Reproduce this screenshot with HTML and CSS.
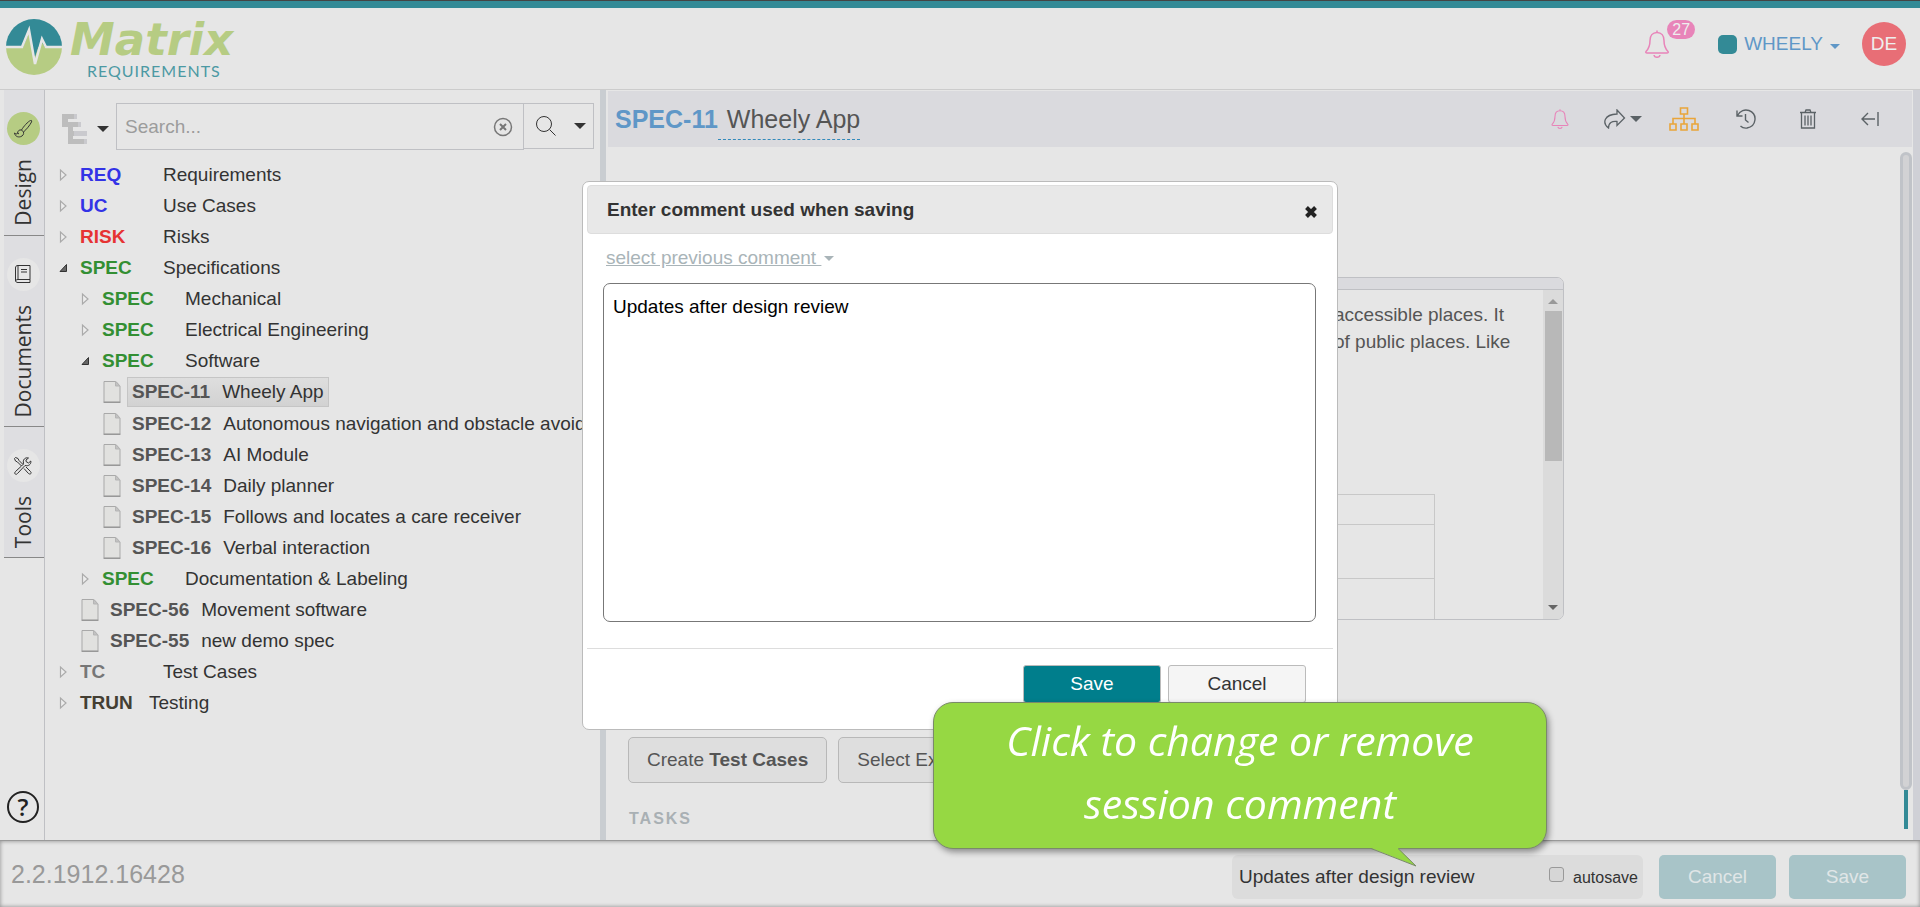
FILE: index.html
```html
<!DOCTYPE html>
<html lang="en">
<head>
  <meta charset="UTF-8" />
  <meta name="viewport" content="width=device-width, initial-scale=1.0" />
  <title>SPEC-11 Wheely App - Matrix Requirements</title>
  <link rel="stylesheet" href="styles.css">
</head>
<body>
  <!-- shared icons -->
  <svg class="defs" width="0" height="0" aria-hidden="true">
    <symbol id="bell" viewBox="0 0 24 28">
      <path d="M12 0.500V2.500M12 2.500C7.500 2.500 5 6 5 10.500C5 16.500 3.500 19 1 21.500C0.500 22.500 1 23 2 23H22C23 23 23.500 22.500 23 21.500C20.500 19 19 16.500 19 10.500C19 6 16.500 2.500 12 2.500ZM9 25C9.500 28 14.500 28 15 25" fill="none" stroke="currentColor" stroke-width="1.500" />
    </symbol>
    <symbol id="doc" viewBox="0 0 18 22">
      <path d="M1 0.500H13L17 5V21H1Z" fill="#e1e1df" stroke="#a9a9a9" />
      <path d="M12.500 0.500V5H17Z" fill="#c2c2c2" stroke="#b5b5b5" />
      <path d="M0.500 21.300H17.500" stroke="#8d8d8d" />
    </symbol>
    <symbol id="closed" viewBox="0 0 10 14">
      <path d="M1.500 2V12L7 7Z" fill="#ececec" stroke="#aaa" stroke-width="1.200" />
    </symbol>
    <symbol id="open" viewBox="0 0 10 14">
      <path d="M1 10.500L7.500 3.500V10.500Z" fill="#666" stroke="#333" />
    </symbol>
  </svg>

  <header class="header">
    <a class="logo" href="#">
      <svg width="58" height="58" viewBox="0 0 58 58" aria-hidden="true">
        <path d="M1 29A28 28 0 0 1 57 29Z" fill="#338a96" />
        <path d="M1 29A28 28 0 0 0 57 29Z" fill="#b6cc83" />
        <path d="M18 29L24 15L30 44L36 23L40 29Z" fill="#b6cc83" />
        <path d="M27 29L24 13L29 44Z" fill="#b6cc83" />
        <path d="M26 25L29 42L36 21V15L26 14Z" fill="#338a96" />
        <path d="M0 29H17L24 12L30 46L37 21L41 29H58" fill="none" stroke="#e6e6e6" stroke-width="2.500" />
      </svg>
      <span class="logo-text">
        <span class="logo-name">Matrix</span>
        <span class="logo-sub">REQUIREMENTS</span>
      </span>
    </a>
    <div class="account">
      <button class="notifications" aria-label="Notifications">
        <svg width="24" height="28"><use href="#bell" /></svg>
        <span class="badge">27</span>
      </button>
      <button class="project"><span class="project-color"></span>WHEELY<span class="caret"></span></button>
      <button class="avatar">DE</button>
    </div>
  </header>

  <main class="main">
    <nav class="sidebar">
      <a class="tab active" href="#">
        <span class="tab-icon">
          <svg width="20" height="20" viewBox="0 0 20 20" fill="none" stroke="#333" stroke-width="1"><path d="M17.500 1.500C15 2.500 10.500 7.500 8.500 11L10.500 13C13.500 10.500 17 6 18.500 3C19 1.500 18.500 1.200 17.500 1.500ZM8.500 11C6 10.500 4.800 12 4.600 14C4.400 15.500 3 15 1.500 14C2 17 4.500 18.500 7.500 17.700C10 17 11 15 10.500 13M4.600 14L6 15" /></svg>
        </span>
        <span class="tab-label">Design</span>
      </a>
      <a class="tab" href="#">
        <span class="tab-icon">
          <svg width="18" height="20" viewBox="0 0 18 20" fill="none" stroke="#333" stroke-width="1"><path d="M4 1.500H16V15.500H4V1.500C2 1.500 1.500 2.500 1.500 4V16C1.500 18 2.500 18.500 4 18.500H16V15.500M4 15.500C2.500 15.500 1.500 16.500 1.500 17M7 5.500H13M7 8H13" /></svg>
        </span>
        <span class="tab-label">Documents</span>
      </a>
      <a class="tab" href="#">
        <span class="tab-icon">
          <svg width="20" height="20" viewBox="0 0 20 20" fill="none" stroke="#333" stroke-width="1"><path d="M2.500 1.500L5 2.500L6 4.500L10 8.500L8.500 10L4.500 6L2.500 5L1.500 2.500ZM11 12.500L15.500 17.500C17.500 19 19 17 17.500 15.500L13 11M8.500 10L2.500 15.500C0.500 17.500 3 19.500 4.500 17.500L12 9.500C15 10.500 18.500 8.500 17.800 5L15.500 7L13 5.500V4L15.500 2C12 1 9.500 4 10.500 7L10 8.500" /></svg>
        </span>
        <span class="tab-label">Tools</span>
      </a>
      <button class="help" aria-label="Help">?</button>
    </nav>

    <section class="tree-panel">
      <div class="toolbar">
        <button class="tree-mode" aria-label="Tree display">
          <svg width="26" height="30" viewBox="0 0 26 30"><path d="M0 0H15V5H6V8H19V13H11V17H25V22H11V25H25V30H6V13H0Z" fill="#bdbdbd" /><path d="M12 0H15V5H12ZM16 8H19V13H16ZM12 17H25V22H12ZM22 25H25V30H22Z" fill="#cacace" /></svg>
          <span class="caret dark"></span>
        </button>
        <div class="search">
          <input type="text" class="search-input" placeholder="Search..." aria-label="Search" />
          <button class="search-clear" aria-label="Clear search">
            <svg width="20" height="20" viewBox="0 0 20 20" fill="none" stroke="#777"><circle cx="10" cy="10" r="8.500" stroke-width="1.500" /><path d="M7 7L13 13M13 7L7 13" stroke-width="2" /></svg>
          </button>
        </div>
        <button class="search-go" aria-label="Run search">
          <svg width="22" height="22" viewBox="0 0 22 22" fill="none" stroke="#333"><circle cx="9" cy="9" r="7.500" /><path d="M14.500 14.500L20.500 20.500" /></svg>
          <span class="caret dark"></span>
        </button>
      </div>
      <ul class="tree">
        <li class="node"><svg class="arrow"><use href="#closed" /></svg><b class="code req">REQ</b>Requirements</li>
        <li class="node"><svg class="arrow"><use href="#closed" /></svg><b class="code req">UC</b>Use Cases</li>
        <li class="node"><svg class="arrow"><use href="#closed" /></svg><b class="code risk">RISK</b>Risks</li>
        <li class="node"><svg class="arrow"><use href="#open" /></svg><b class="code spec">SPEC</b>Specifications</li>
        <li class="node level-2"><svg class="arrow"><use href="#closed" /></svg><b class="code spec">SPEC</b>Mechanical</li>
        <li class="node level-2"><svg class="arrow"><use href="#closed" /></svg><b class="code spec">SPEC</b>Electrical Engineering</li>
        <li class="node level-2"><svg class="arrow"><use href="#open" /></svg><b class="code spec">SPEC</b>Software</li>
        <li class="node level-3 current"><svg class="doc"><use href="#doc" /></svg><a class="item" href="#"><b>SPEC-11</b>Wheely App</a></li>
        <li class="node level-3"><svg class="doc"><use href="#doc" /></svg><a class="item" href="#"><b>SPEC-12</b>Autonomous navigation and obstacle avoidance</a></li>
        <li class="node level-3"><svg class="doc"><use href="#doc" /></svg><a class="item" href="#"><b>SPEC-13</b>AI Module</a></li>
        <li class="node level-3"><svg class="doc"><use href="#doc" /></svg><a class="item" href="#"><b>SPEC-14</b>Daily planner</a></li>
        <li class="node level-3"><svg class="doc"><use href="#doc" /></svg><a class="item" href="#"><b>SPEC-15</b>Follows and locates a care receiver</a></li>
        <li class="node level-3"><svg class="doc"><use href="#doc" /></svg><a class="item" href="#"><b>SPEC-16</b>Verbal interaction</a></li>
        <li class="node level-2"><svg class="arrow"><use href="#closed" /></svg><b class="code spec">SPEC</b>Documentation &amp; Labeling</li>
        <li class="node level-2"><svg class="doc"><use href="#doc" /></svg><a class="item" href="#"><b>SPEC-56</b>Movement software</a></li>
        <li class="node level-2"><svg class="doc"><use href="#doc" /></svg><a class="item" href="#"><b>SPEC-55</b>new demo spec</a></li>
        <li class="node"><svg class="arrow"><use href="#closed" /></svg><b class="code tc">TC</b>Test Cases</li>
        <li class="node"><svg class="arrow"><use href="#closed" /></svg><b class="code trun">TRUN</b>Testing</li>
      </ul>
    </section>

    <section class="item-panel">
      <div class="item-header">
        <h1 class="item-title"><b>SPEC-11</b><span>Wheely App</span></h1>
        <div class="item-actions">
          <button class="action pink" aria-label="Subscribe"><svg width="18" height="20"><use href="#bell" /></svg></button>
          <button class="action" aria-label="Share">
            <svg width="23" height="20" viewBox="0 0 23 20" fill="none" stroke="currentColor" stroke-width="1.300"><path d="M14 1L21.500 9L14 16.500V12.500C9 12 5.500 13.500 5.500 19C-1 14 1 5.500 14 5Z" /></svg>
            <span class="caret dark"></span>
          </button>
          <button class="action orange" aria-label="Links">
            <svg width="30" height="24" viewBox="0 0 30 24" fill="none" stroke="currentColor" stroke-width="1.600"><path d="M11.500 1H18.500V7H11.500ZM15 7V17M4 17V11.500H26V17M1 17H7V23H1ZM12 17H18V23H12ZM23 17H29V23H23Z" /></svg>
          </button>
          <button class="action" aria-label="History">
            <svg width="20" height="20" viewBox="0 0 20 20" fill="none" stroke="currentColor" stroke-width="1.400"><path d="M1 1.500V7H6.500M1.500 6.500C4 1.500 9 0 13 1.500C22 5 20.500 17.500 11 19C8.500 19.300 6 18.500 4.500 17M9.500 5V11L12.500 13.500" /></svg>
          </button>
          <button class="action" aria-label="Delete">
            <svg width="18" height="20" viewBox="0 0 18 20" fill="none" stroke="currentColor" stroke-width="1.300"><path d="M1 3.500H17M6 3.500L7 1H11L12 3.500M2.500 3.500V19H15.500V3.500M6 6.500V16.500M9 6.500V16.500M12 6.500V16.500" /></svg>
          </button>
          <button class="action" aria-label="Collapse">
            <svg width="18" height="16" viewBox="0 0 18 16" fill="none" stroke="currentColor" stroke-width="1.400"><path d="M7 2L1 8L7 14M1 8H14M17 1V15" /></svg>
          </button>
        </div>
      </div>
      <div class="item-body">
        <div class="item-content">
          <div class="editor">
            <div class="editor-bar"></div>
            <div class="editor-area">
              <div class="editor-text">
                <p>accessible places. It<br>of public places. Like</p>
                <div class="editor-table"><div></div><div></div><div></div></div>
              </div>
              <div class="editor-scroll">
                <span class="scroll-up"></span>
                <span class="scroll-thumb"></span>
                <span class="scroll-down"></span>
              </div>
            </div>
          </div>
          <div class="links">
            <button class="link-button">Create <b>Test Cases</b></button>
            <button class="link-button">Select Existing</button>
          </div>
          <h2 class="tasks">TASKS</h2>
        </div>
        <div class="page-scroll"><span class="page-thumb"></span><span class="page-track"></span></div>
      </div>
    </section>
    <div class="splitter"></div>
  </main>

  <footer class="footer">
    <span class="version">2.2.1912.16428</span>
    <div class="session">
      <span class="session-comment">Updates after design review</span>
      <input type="checkbox" id="autosave" class="autosave" />
      <label for="autosave">autosave</label>
    </div>
    <button class="footer-button">Cancel</button>
    <button class="footer-button">Save</button>
  </footer>

  <div class="overlay">
    <div class="dialog" role="dialog" aria-labelledby="dialog-title">
      <div class="dialog-header">
        <h2 id="dialog-title">Enter comment used when saving</h2>
        <button class="close" aria-label="Close">
          <svg width="14" height="14" viewBox="0 0 14 14"><path d="M2.500 2.500L11.500 11.500M11.500 2.500L2.500 11.500" stroke="#222" stroke-width="4" /></svg>
        </button>
      </div>
      <div class="dialog-body">
        <a class="previous" href="#"><span>select previous comment&nbsp;</span><span class="caret"></span></a>
        <textarea class="comment" aria-label="Comment">Updates after design review</textarea>
      </div>
      <div class="dialog-footer">
        <button class="button primary">Save</button>
        <button class="button">Cancel</button>
      </div>
    </div>
  </div>

  <div class="callout">
    Click to change or remove<br>session comment
    <svg class="callout-tail" width="46" height="20" viewBox="0 0 46 20"><path d="M0 1L45 19L27 1V0H0Z" fill="#96d843" /><path d="M0 1.500L45 19L27 1.500" fill="none" stroke="#7a8a6a" /></svg>
  </div>
</body>
</html>
```
FILE: styles.css
```css
* {
  box-sizing: border-box;
}
body {
  margin: 0;
  height: 100vh;
  display: flex;
  flex-direction: column;
  overflow: hidden;
  background: #e6e6e6;
  color: #333;
  font-family: "Liberation Sans", Arial, sans-serif;
  font-size: 19px;
}
button {
  padding: 0;
  border: none;
  background: none;
  color: inherit;
  font: inherit;
  cursor: pointer;
}
a {
  color: inherit;
  text-decoration: none;
}
svg {
  display: block;
}
.defs {
  position: absolute;
}
.caret {
  border: 5px solid transparent;
  border-top-color: currentColor;
  border-bottom: none;
}
.caret.dark {
  border-width: 6px 6px 0;
}

/* header */
.header {
  flex: none;
  height: 90px;
  padding: 0 14px 0 5px;
  display: flex;
  justify-content: space-between;
  border-top: 1px solid #444;
  border-bottom: 1px solid #ccc;
  box-shadow: inset 0 7px #338a96;
}
.logo {
  display: flex;
  gap: 7px;
  padding-top: 17px;
}
.logo-text {
  display: flex;
  flex-direction: column;
}
.logo-name {
  color: #b6cc83;
  font: italic bold 45px/43px "DejaVu Sans", sans-serif;
}
.logo-sub {
  padding-left: 17px;
  color: #4c99a3;
  font: 16px/20px Lato, sans-serif;
  letter-spacing: 1px;
}
.account {
  display: flex;
  align-items: center;
  padding-bottom: 2px;
}
.notifications {
  position: relative;
  margin-right: 49px;
  color: #e884b9;
}
.badge {
  position: absolute;
  left: 22px;
  top: -10px;
  width: 28px;
  border-radius: 10px;
  background: #e884b9;
  color: #eee;
  font-size: 16px;
  line-height: 19px;
}
.project {
  display: flex;
  align-items: center;
  margin-right: 22px;
  color: #5f97c7;
}
.project-color {
  width: 19px;
  height: 19px;
  margin-right: 7px;
  border-radius: 5px;
  background: #338a96;
}
.project .caret {
  margin: 4px 0 0 7px;
}
.avatar {
  width: 44px;
  height: 44px;
  border-radius: 50%;
  background: #e86e76;
  color: #eee;
}

/* main area */
.main {
  flex: 1;
  min-height: 0;
  display: flex;
}
.sidebar {
  flex: none;
  width: 45px;
  padding-left: 4px;
  display: flex;
  flex-direction: column;
  border-right: 1px solid #bfc0c4;
}
.tab {
  display: flex;
  flex-direction: column;
  align-items: center;
  gap: 14px;
  padding: 22px 2px 9px 0;
  border-bottom: 1px solid #888;
  background: #dedee1;
}
.tab-icon {
  width: 33px;
  height: 33px;
  display: flex;
  align-items: center;
  justify-content: center;
  border-radius: 50%;
  background: #e6e6e6;
}
.active .tab-icon {
  background: #b6cc83;
}
.tab-label {
  writing-mode: vertical-rl;
  transform: rotate(180deg);
  font: 21px/26px "Open Sans", sans-serif;
}
.help {
  width: 32px;
  height: 32px;
  margin: auto 0 17px 3px;
  border: 2px solid #222;
  border-radius: 50%;
  color: #222;
  font: 600 24px/28px "Open Sans", sans-serif;
}
.tree-panel {
  flex: none;
  width: 555px;
  padding: 13px 6px 0 0;
  overflow: hidden;
}
.splitter {
  flex: none;
  width: 7px;
  background: #cfd0d6;
}
.toolbar {
  display: flex;
  align-items: flex-start;
  margin-bottom: 9px;
  padding-left: 17px;
}
.tree-mode {
  display: flex;
  align-items: center;
  gap: 9px;
  width: 54px;
  padding-top: 11px;
}
.search {
  flex: 1;
  height: 47px;
  display: flex;
  align-items: center;
  padding: 0 10px 0 8px;
  border: 1px solid #bfc0c4;
}
.search-input {
  flex: 1;
  min-width: 0;
  padding: 0;
  border: none;
  background: none;
  font: inherit;
}
.search-input::placeholder {
  color: #9c9c9c;
}
.search-go {
  display: flex;
  align-items: center;
  gap: 17px;
  width: 70px;
  height: 46px;
  padding-left: 11px;
  border: 1px solid #bfc0c4;
  border-left: none;
}
.tree {
  margin: 0 -6px 0 0;
  padding: 0;
  list-style: none;
}
.node {
  display: flex;
  align-items: center;
  height: 31px;
  padding-left: 14px;
  white-space: nowrap;
}
.level-2 {
  padding-left: 36px;
}
.level-3 {
  padding-left: 58px;
}
.current {
  height: 32px;
}
.arrow {
  flex: none;
  width: 10px;
  height: 14px;
  margin-right: 11px;
}
.doc {
  flex: none;
  width: 18px;
  height: 22px;
  margin-right: 6px;
}
.code {
  width: 83px;
}
.req {
  color: #3333e6;
}
.risk {
  color: #e63333;
}
.spec {
  color: #338f33;
}
.tc {
  color: #777;
}
.trun {
  width: 69px;
  color: #443f33;
}
.item {
  padding: 3px 4px;
  border: 1px solid transparent;
  line-height: 22px;
}
.item b {
  margin-right: 12px;
  color: #555;
}
.current .item {
  border-color: #c5c5c5;
  background: linear-gradient(#dedede, #d2d2d2);
}

/* item */
.item-panel {
  flex: 1;
  min-width: 0;
  display: flex;
  flex-direction: column;
  border-left: 6px solid #c9cdd1;
}
.item-header {
  flex: none;
  height: 56px;
  display: flex;
  align-items: center;
  justify-content: space-between;
  margin: 1px 1px 0 2px;
  padding: 0 11px 0 7px;
  background: #dadade;
}
.item-title {
  margin: 0;
  color: #555;
  font-size: 25px;
  font-weight: normal;
}
.item-title b {
  color: #5f97c7;
}
.item-title span {
  display: inline-block;
  padding: 6px 0 5px 9px;
  border-bottom: 1px dashed #338abb;
}
.item-actions {
  display: flex;
}
.action {
  width: 62px;
  display: flex;
  align-items: center;
  justify-content: center;
  gap: 4px;
  color: #5b6266;
}
.pink {
  color: #e884b9;
}
.orange {
  color: #e9a53a;
}
.item-body {
  flex: 1;
  min-height: 0;
  display: flex;
}
.item-content {
  flex: 1;
  padding: 130px 336px 0 22px;
}
.editor {
  border: 1px solid #bfc0c4;
  border-radius: 7px;
  overflow: hidden;
}
.editor-bar {
  height: 12px;
  border-bottom: 1px solid #bfc0c4;
  background: #dadade;
}
.editor-area {
  height: 329px;
  display: flex;
}
.editor-text {
  flex: 1;
  padding: 11px 33px 0 0;
  color: #555;
  line-height: 27px;
}
.editor-text p {
  width: 176px;
  height: 193px;
  margin: 0 0 0 auto;
  white-space: nowrap;
}
.editor-table {
  margin-right: 75px;
  border: 1px solid #c8c8c8;
}
.editor-table div {
  height: 54px;
  border-bottom: 1px solid #c8c8c8;
}
.editor-table div:first-child {
  height: 30px;
}
.editor-scroll {
  width: 20px;
  display: flex;
  flex-direction: column;
  align-items: center;
  padding: 9px 0;
  background: #dbdbdb;
}
.scroll-up {
  border: 5px solid transparent;
  border-bottom-color: #999;
  border-top: none;
}
.scroll-thumb {
  width: 17px;
  height: 150px;
  margin-top: 7px;
  background: #b8b8b8;
}
.scroll-down {
  margin-top: auto;
  border: 5px solid transparent;
  border-top-color: #666;
  border-bottom: none;
}
.links {
  display: flex;
  gap: 11px;
  margin: 117px 0 27px;
}
.link-button {
  height: 46px;
  padding: 0 18px;
  border: 1px solid #b8b8b8;
  border-radius: 5px;
  background: #dedede;
  color: #555;
}
.tasks {
  margin: 0;
  padding-left: 1px;
  color: #a9b0b4;
  font-size: 16px;
  letter-spacing: 2px;
}
.page-scroll {
  width: 12px;
  margin-right: 1px;
  padding: 5px 0 11px;
  display: flex;
  flex-direction: column;
  align-items: center;
}
.page-thumb {
  flex: 1;
  width: 12px;
  border: 3px solid #c0c3c8;
  border-radius: 6px;
  background: #d2d2d4;
}
.page-track {
  width: 4px;
  height: 39px;
  background: #338a96;
}

/* footer */
.footer {
  flex: none;
  height: 67px;
  display: flex;
  align-items: center;
  padding: 5px 14px 0 11px;
  border-top: 1px solid #999;
  box-shadow: inset 0 0 4px #888;
}
.version {
  flex: 1;
  padding-bottom: 5px;
  color: #999;
  font-size: 25px;
}
.session {
  width: 411px;
  height: 44px;
  display: flex;
  align-items: center;
  margin-right: 3px;
  padding: 0 5px 0 7px;
  border-radius: 6px;
  background: #dcdcdc;
}
.session-comment {
  flex: 1;
}
.session label {
  padding-top: 3px;
  font-size: 16px;
}
.autosave {
  appearance: none;
  width: 15px;
  height: 15px;
  margin: 0 9px 4px 0;
  border: 1px solid #999;
  border-radius: 3px;
  background: #d6d6d6;
}
.footer-button {
  width: 117px;
  height: 44px;
  margin-left: 13px;
  border-radius: 5px;
  background: #a8c4c8;
  color: #e0e6e7;
}

/* dialog */
.overlay {
  position: fixed;
  inset: 0;
  display: flex;
  justify-content: center;
  align-items: flex-start;
  padding-top: 181px;
}
.dialog {
  width: 756px;
  padding: 3px 4px 26px;
  border: 1px solid #bbb;
  border-radius: 7px;
  background: #fff;
}
.dialog-header {
  height: 49px;
  display: flex;
  align-items: center;
  justify-content: space-between;
  padding: 0 14px 0 19px;
  border: 1px solid #ddd;
  border-radius: 4px;
  background: #e8e8e8;
}
.dialog-header h2 {
  margin: 0;
  font-size: 19px;
}
.close {
  padding-top: 4px;
}
.dialog-body {
  padding: 13px 17px 26px 16px;
}
.previous {
  display: flex;
  align-items: center;
  padding-left: 3px;
  color: #a9b4b8;
  line-height: 22px;
}
.previous span:first-child {
  text-decoration: underline;
}
.previous .caret {
  margin-left: 3px;
}
.comment {
  display: block;
  width: 100%;
  height: 339px;
  margin-top: 14px;
  padding: 12px 9px;
  border: 1px solid #777;
  border-radius: 7px;
  color: #000;
  font: inherit;
  resize: none;
}
.dialog-footer {
  display: flex;
  justify-content: flex-end;
  gap: 7px;
  padding: 16px 27px 0 0;
  border-top: 1px solid #ddd;
}
.button {
  width: 138px;
  height: 38px;
  border: 1px solid #bbb;
  border-radius: 3px;
  background: #f5f5f5;
}
.primary {
  background: #007e8c;
  color: #fff;
}

.callout {
  position: fixed;
  right: 373px;
  bottom: 58px;
  width: 614px;
  height: 147px;
  padding-top: 6px;
  border: 1px solid #7a8a6a;
  border-radius: 20px;
  background: #96d843;
  box-shadow: 2px 3px 6px rgba(0, 0, 0, 0.4);
  color: #fff;
  font: italic 41px/63px "Segoe Print", "Comic Sans MS", "Open Sans", sans-serif;
  text-align: center;
}
.callout-tail {
  position: absolute;
  right: 129px;
  bottom: -19px;
}
```
